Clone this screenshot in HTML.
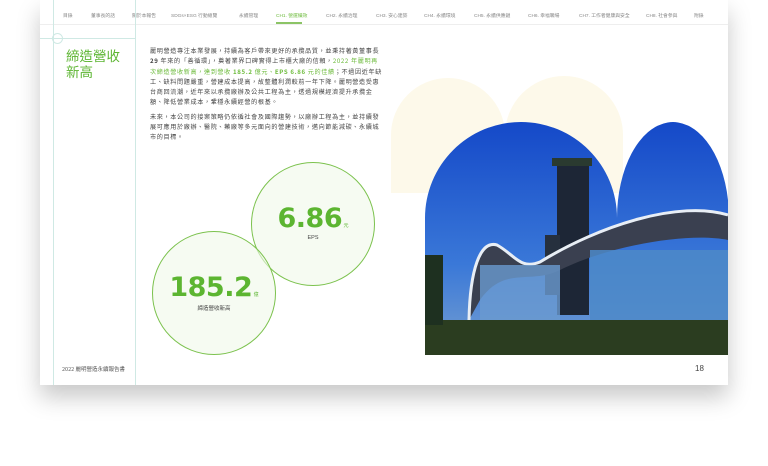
<!DOCTYPE html>
<html><head><meta charset="utf-8"><style>
body{margin:0;width:768px;height:466px;background:#fff;overflow:hidden;font-family:"Liberation Sans","Noto Sans CJK TC",sans-serif;position:relative}
.page{position:absolute;left:40px;top:0;width:688px;height:385px;background:#fff;box-shadow:0 12px 22px rgba(0,0,0,0.22)}
.nav{position:absolute;top:12px;left:0;width:688px;font-size:4.8px;color:#888;white-space:nowrap}
.nav span{position:absolute;top:0}
.a{position:absolute}
.txt{position:absolute;left:150px;top:46px;width:234px;font-size:6.1px;letter-spacing:0.65px;line-height:10.3px;color:#444;font-family:"Noto Sans CJK TC",sans-serif}
.g{color:#6dbb3c}
.circ{position:absolute;border:1.2px solid #7cc24e;border-radius:50%;background:rgba(240,248,234,0.6);text-align:center;box-sizing:border-box}
.num{font-weight:bold;color:#5cb531;font-family:"DejaVu Sans","Liberation Sans",sans-serif;letter-spacing:-0.5px}
</style></head><body>
<div class="page">
<div class="nav">
<span style="left:23px">目錄</span><span style="left:51px">董事長的話</span><span style="left:92px">關於本報告</span><span style="left:131px">SDGs×ESG 行動總覽</span><span style="left:199px">永續管理</span><span style="left:236px;color:#6dbb3c">CH1. 營運績效</span><span style="left:286px">CH2. 永續治理</span><span style="left:336px">CH3. 安心建築</span><span style="left:384px">CH4. 永續環境</span><span style="left:434px">CH5. 永續供應鏈</span><span style="left:488px">CH6. 幸福職場</span><span style="left:539px">CH7. 工作者健康與安全</span><span style="left:606px">CH8. 社會參與</span><span style="left:654px">附錄</span>
</div>
<div class="a" style="left:236px;top:22px;width:26px;height:2px;background:#8cc466"></div>
<div class="a" style="left:0;top:24px;width:688px;height:1px;background:#eee"></div>
<div class="a" style="left:13px;top:0;width:1px;height:385px;background:#cfe9e4"></div>
<div class="a" style="left:95px;top:0;width:1px;height:385px;background:#cfe9e4"></div>
<div class="a" style="left:0;top:38px;width:96px;height:1px;background:#cfe9e4"></div>
<div class="a" style="left:12px;top:33px;width:9px;height:9px;border:1px solid #cfe9e4;border-radius:50%"></div>
<div class="a" style="left:26px;top:47px;font-size:13.5px;line-height:16px;color:#5cb531;font-family:'Noto Sans CJK TC',sans-serif">締造營收<br>新高</div>
<div class="a" style="left:22px;top:365px;font-size:5.5px;color:#555;font-family:'Noto Sans CJK TC',sans-serif">2022 麗明營造永續報告書</div>
<div class="a" style="left:655px;top:364px;font-size:8px;color:#444">18</div>
</div>
<div class="txt">麗明營造專注本業發展，持續為客戶帶來更好的承攬品質，並秉持著黃董事長<b>29</b> 年來的「善循環」，奠著業界口碑實得上市櫃大廠的信賴，<span class="g">2022 年麗明再次締造營收新高，達到營收 <b>185.2</b> 億元、<b>EPS 6.86</b> 元的佳績</span>；不過因近年缺工、缺料問題嚴重，營建成本提高，故整體利潤較前一年下降。麗明營造受惠台商回流潮，近年來以承攬廠辦及公共工程為主，透過規模經濟提升承攬金額、降低營業成本，鞏穩永續經營的根基。<div style="height:4px"></div>未來，本公司的接案策略仍依循社會及國際趨勢，以廠辦工程為主，並持續發展可應用於廠辦、醫院、藥廠等多元面向的營建技術，邁向節能減碳、永續城市的目標。</div>
<div class="circ" style="left:251px;top:162px;width:124px;height:124px"><div style="margin-top:40px"><span class="num" style="font-size:27px">6.86</span><span style="font-size:5px;color:#5cb531"> 元</span></div><div style="font-size:5.5px;color:#444;margin-top:1px">EPS</div></div>
<div class="circ" style="left:152px;top:231px;width:124px;height:124px"><div style="margin-top:40px"><span class="num" style="font-size:27px">185.2</span><span style="font-size:5px;color:#5cb531"> 億</span></div><div style="font-size:5.5px;color:#444;margin-top:1px;font-family:'Noto Sans CJK TC',sans-serif">締造營收新高</div></div>
<svg class="a" style="left:0;top:0" width="768" height="466">
<defs>
<clipPath id="c"><path d="M425 355 V218 A96 96 0 0 1 617 218 A56 96 0 0 1 728 200 V355 Z"/></clipPath>
<linearGradient id="sky" x1="0" y1="0" x2="0" y2="1"><stop offset="0" stop-color="#1448c8"/><stop offset="0.6" stop-color="#3a78d8"/><stop offset="1" stop-color="#7aa2d0"/></linearGradient>
</defs>
<path d="M391 193 V135 A57 57 0 0 1 505 135 A57 57 0 0 1 623 135 V193 Z" fill="#fdf9ea"/>
<g clip-path="url(#c)">
<rect x="425" y="120" width="303" height="240" fill="url(#sky)"/>
<rect x="557" y="165" width="32" height="150" fill="#1d2636"/>
<rect x="552" y="158" width="40" height="8" fill="#2a3a30"/>
<rect x="545" y="235" width="15" height="60" fill="#26303e"/>
<path d="M469 320 C470 270 480 240 497 245 C515 255 520 270 540 262 C600 225 680 200 728 215 V240 C690 232 610 245 560 270 C530 285 505 265 480 300 Z" fill="#3a4050"/>
<path d="M469 320 C470 270 480 240 497 245 C515 255 520 270 540 262 C600 225 680 200 728 215" fill="none" stroke="#e8eef5" stroke-width="3"/>
<rect x="590" y="250" width="138" height="72" fill="#4d89c8" opacity="0.85"/>
<rect x="480" y="265" width="80" height="57" fill="#6a9ad0" opacity="0.8"/>
<rect x="425" y="320" width="303" height="35" fill="#2b3d20"/>
<rect x="425" y="255" width="18" height="70" fill="#1e3020"/>
</g>
</svg>
</body></html>
